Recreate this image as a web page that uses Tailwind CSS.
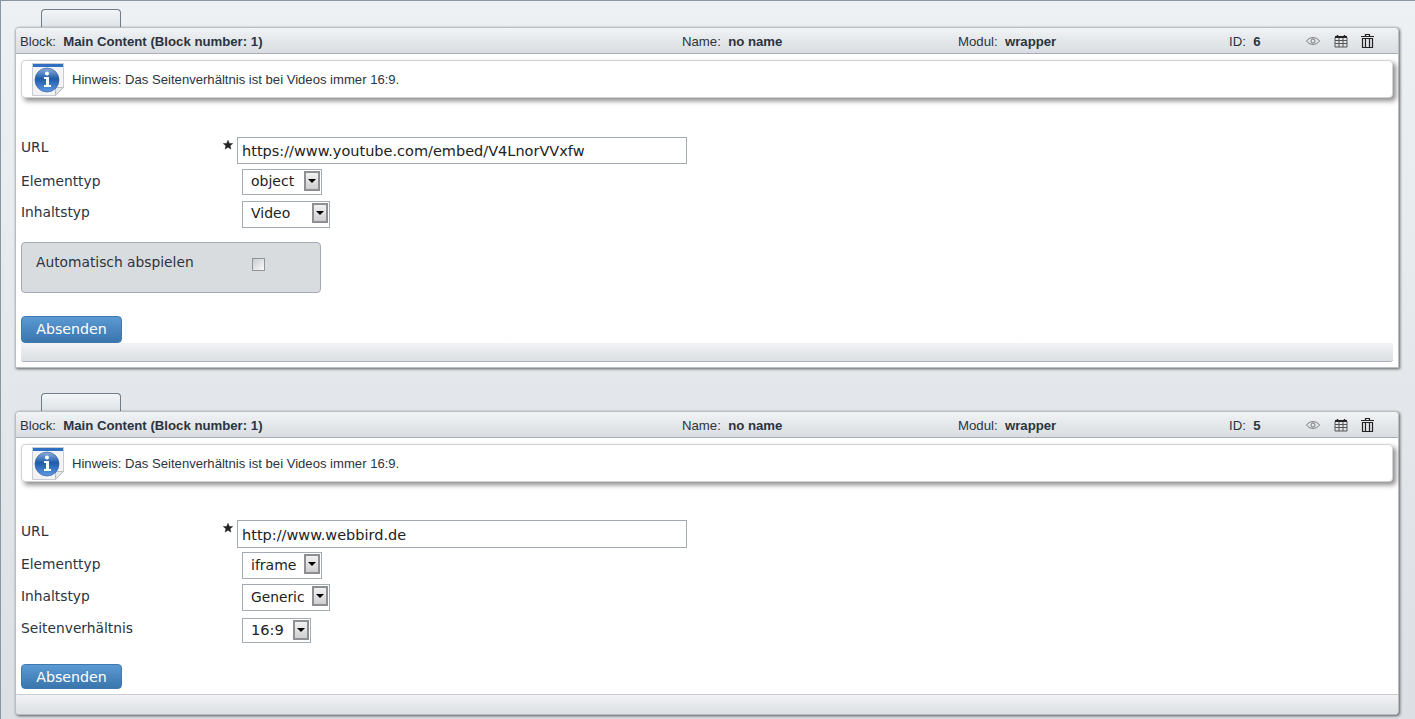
<!DOCTYPE html>
<html lang="de">
<head>
<meta charset="UTF-8">
<title>Blocks</title>
<script src="https://cdn.jsdelivr.net/npm/@tailwindcss/browser@4"></script>
</head>
<body class="h-[719px] overflow-hidden bg-gradient-to-b from-[#eef1f4] to-[#dcdfe3] border-t border-l border-[#8a96a3] font-['Liberation_Sans',sans-serif] text-[#2b3440]">

<div class="pl-[14px] pr-[16px] pt-[8px]">

  <!-- block 6 -->
  <section>
    <div class="ml-[26px] w-[80px] h-[18px] rounded-t-[4px] border border-b-0 border-[#6f7d8a] bg-gradient-to-b from-[#f3f5f7] to-[#dfe3e7]"></div>
    <div class="h-[341px] bg-white rounded-t-[4px] border border-[#b9bec4] shadow-[1px_1px_3px_rgba(0,0,0,0.6)] flex flex-col">
      <div class="h-[26px] shrink-0 pl-[4px] pt-[2px] grid grid-cols-[662px_276px_271px_1fr] items-center text-[13.2px] border-b border-[#a9afb6] bg-gradient-to-b from-[#f1f3f5] to-[#d9dde1] rounded-t-[4px]">
        <div>Block:&nbsp; <b>Main Content (Block number: 1)</b></div>
        <div>Name:&nbsp; <b>no name</b></div>
        <div>Modul:&nbsp; <b>wrapper</b></div>
        <div class="flex items-center">
          <span class="w-[77px]">ID:&nbsp; <b>6</b></span>
          <span class="flex items-center gap-[14px]">
            <svg width="14" height="10" viewBox="0 0 14 10" fill="none" stroke="#777"><path d="M.5 5c3-4.500 10-4.500 13 0-3 4.500-10 4.500-13 0z"/><circle cx="7" cy="5" r="2"/></svg>
            <svg width="14" height="14" viewBox="0 0 14 14" fill="none" stroke="#555"><path d="M1 3.500h12v9.500H1zM1 6.500h12M1 9.500h12M5 3.500v9.500M9 3.500v9.500"/><path d="M3.500 1v2.500M10.500 1v2.500" stroke="#222" stroke-width="1.500"/><path d="M1 3h12" stroke="#222" stroke-width="2"/></svg>
            <svg class="-ml-[1px]" width="13" height="14" viewBox="0 0 13 14" fill="none" stroke="#222"><path d="M0 2.500h13M4.500 2.500V.5h4v2" stroke-width="1.200"/><path d="M1.500 4.500h10V13.500h-10zM4.500 4.500v9M8.500 4.500v9" stroke-width="1.200"/></svg>
          </span>
        </div>
      </div>

      <div class="mx-[5px] mt-[6px] h-[38px] shrink-0 flex items-center gap-[8px] pl-[10px] bg-white rounded-[4px] border border-[#cfd2d6] shadow-[3px_3px_5px_rgba(0,0,0,0.45)] text-[13.1px]">
        <svg width="32" height="33" viewBox="0 0 32 33"><defs><linearGradient id="orb" x1="0" y1="0" x2="0" y2="1"><stop offset="0" stop-color="#8fb0e0"/><stop offset="0.450" stop-color="#1f5aa8"/><stop offset="1" stop-color="#5f9ae6"/></linearGradient></defs><path d="M.5.5h31v24l-8 8H.5z" fill="#f2f3f5" stroke="#c9ccd0"/><path d="M1 1h30v3H1z" fill="#2f6fc4"/><path d="M23.500 32.500v-8h8z" fill="#e4e6e9" stroke="#b9bcc0"/><circle cx="15" cy="17" r="12" fill="url(#orb)" stroke="#2a5596" stroke-width=".6"/><circle cx="15" cy="10.500" r="2" fill="#fff"/><path d="M12 14h5v8h2v2h-7v-2h2v-6h-2z" fill="#fff"/></svg>
        <span class="pt-[1px]">Hinweis: Das Seitenverhältnis ist bei Videos immer 16:9.</span>
      </div>

      <form class="font-['DejaVu_Sans',sans-serif] text-[13.8px] pl-[5px] pt-[39px]">
        <div class="flex h-[27px]">
          <label class="w-[203px]">URL</label>
          <svg class="w-[10px] h-[10px] mt-[3px] -ml-[1px] mr-[4px]" viewBox="0 0 10 10" fill="#222" stroke="#222" stroke-width=".5" stroke-linejoin="round"><path d="M5 .3l1.300 3.100 3.400.2-2.600 2.200.8 3.300L5 7.300 2.100 9.100l.8-3.300L.3 3.600l3.400-.2z"/></svg>
          <input class="w-[450px] h-[27px] px-[4px] border border-[#a5abb2] text-[14.5px] text-[#222] outline-none" value="https://www.youtube.com/embed/V4LnorVVxfw">
        </div>
        <div class="flex mt-[5px] h-[26px]">
          <label class="w-[221px] pt-[2px]">Elementtyp</label>
          <div class="w-[80px] h-[26px] border border-[#a5abb2] flex justify-between pl-[8px] pr-[1px] pt-[1px] text-[14px] text-[#222]"><span>object</span><span class="w-[16px] h-[20px] border-2 border-[#8d8f92] bg-gradient-to-b from-[#f2f2f2] to-[#cfcfcf] flex items-center justify-center"><span class="border-x-[4px] border-t-[4px] border-x-transparent border-t-black"></span></span></div>
        </div>
        <div class="flex mt-[6px] h-[27px]">
          <label class="w-[221px] pt-[1px]">Inhaltstyp</label>
          <div class="w-[88px] h-[27px] border border-[#a5abb2] flex justify-between pl-[8px] pr-[1px] pt-[1px] text-[14px] text-[#222]"><span>Video</span><span class="w-[16px] h-[20px] border-2 border-[#8d8f92] bg-gradient-to-b from-[#f2f2f2] to-[#cfcfcf] flex items-center justify-center"><span class="border-x-[4px] border-t-[4px] border-x-transparent border-t-black"></span></span></div>
        </div>
        <div class="mt-[14px] w-[300px] h-[51px] flex pl-[14px] pt-[9px] bg-[#d9dcdf] border border-[#a5abb2] rounded-[4px]">
          <label class="w-[216px]">Automatisch abspielen</label>
          <span class="mt-[6px] w-[13px] h-[13px] border border-[#8f9499] bg-gradient-to-br from-[#c8cbd0] to-[#fbfbfb]"></span>
        </div>
        <button type="button" class="mt-[23px] block w-[101px] h-[27px] text-[14.2px] text-white rounded-[4px] border border-[#3f79b0] bg-gradient-to-b from-[#5b9ad3] to-[#3a75ad]">Absenden</button>
      </form>

      <div class="mx-[5px] h-[19px] shrink-0 rounded-b-[3px] border-b border-[#aab0b7] bg-gradient-to-b from-[#f1f3f5] to-[#dcdfe3]"></div>
    </div>
  </section>

  <!-- block 5 -->
  <section class="mt-[25px]">
    <div class="ml-[26px] w-[80px] h-[18px] rounded-t-[4px] border border-b-0 border-[#6f7d8a] bg-gradient-to-b from-[#f3f5f7] to-[#dfe3e7]"></div>
    <div class="h-[304px] bg-white rounded-[4px] border border-[#b9bec4] shadow-[1px_1px_3px_rgba(0,0,0,0.6)] flex flex-col">
      <div class="h-[26px] shrink-0 pl-[4px] pt-[2px] grid grid-cols-[662px_276px_271px_1fr] items-center text-[13.2px] border-b border-[#a9afb6] bg-gradient-to-b from-[#f1f3f5] to-[#d9dde1] rounded-t-[4px]">
        <div>Block:&nbsp; <b>Main Content (Block number: 1)</b></div>
        <div>Name:&nbsp; <b>no name</b></div>
        <div>Modul:&nbsp; <b>wrapper</b></div>
        <div class="flex items-center">
          <span class="w-[77px]">ID:&nbsp; <b>5</b></span>
          <span class="flex items-center gap-[14px]">
            <svg width="14" height="10" viewBox="0 0 14 10" fill="none" stroke="#777"><path d="M.5 5c3-4.500 10-4.500 13 0-3 4.500-10 4.500-13 0z"/><circle cx="7" cy="5" r="2"/></svg>
            <svg width="14" height="14" viewBox="0 0 14 14" fill="none" stroke="#555"><path d="M1 3.500h12v9.500H1zM1 6.500h12M1 9.500h12M5 3.500v9.500M9 3.500v9.500"/><path d="M3.500 1v2.500M10.500 1v2.500" stroke="#222" stroke-width="1.500"/><path d="M1 3h12" stroke="#222" stroke-width="2"/></svg>
            <svg class="-ml-[1px]" width="13" height="14" viewBox="0 0 13 14" fill="none" stroke="#222"><path d="M0 2.500h13M4.500 2.500V.5h4v2" stroke-width="1.200"/><path d="M1.500 4.500h10V13.500h-10zM4.500 4.500v9M8.500 4.500v9" stroke-width="1.200"/></svg>
          </span>
        </div>
      </div>

      <div class="mx-[5px] mt-[6px] h-[38px] shrink-0 flex items-center gap-[8px] pl-[10px] bg-white rounded-[4px] border border-[#cfd2d6] shadow-[3px_3px_5px_rgba(0,0,0,0.45)] text-[13.1px]">
        <svg width="32" height="33" viewBox="0 0 32 33"><path d="M.5.5h31v24l-8 8H.5z" fill="#f2f3f5" stroke="#c9ccd0"/><path d="M1 1h30v3H1z" fill="#2f6fc4"/><path d="M23.500 32.500v-8h8z" fill="#e4e6e9" stroke="#b9bcc0"/><circle cx="15" cy="17" r="12" fill="url(#orb)" stroke="#2a5596" stroke-width=".6"/><circle cx="15" cy="10.500" r="2" fill="#fff"/><path d="M12 14h5v8h2v2h-7v-2h2v-6h-2z" fill="#fff"/></svg>
        <span class="pt-[1px]">Hinweis: Das Seitenverhältnis ist bei Videos immer 16:9.</span>
      </div>

      <form class="font-['DejaVu_Sans',sans-serif] text-[13.8px] pl-[5px] pt-[38px]">
        <div class="flex h-[28px]">
          <label class="w-[203px] pt-[1px]">URL</label>
          <svg class="w-[10px] h-[10px] mt-[3px] -ml-[1px] mr-[4px]" viewBox="0 0 10 10" fill="#222" stroke="#222" stroke-width=".5" stroke-linejoin="round"><path d="M5 .3l1.300 3.100 3.400.2-2.600 2.200.8 3.300L5 7.300 2.100 9.100l.8-3.300L.3 3.600l3.400-.2z"/></svg>
          <input class="w-[450px] h-[28px] px-[4px] pt-[2px] border border-[#a5abb2] text-[14.5px] text-[#222] outline-none" value="http://www.webbird.de">
        </div>
        <div class="flex mt-[4px] h-[27px]">
          <label class="w-[221px] pt-[2px]">Elementtyp</label>
          <div class="w-[80px] h-[27px] border border-[#a5abb2] flex justify-between pl-[8px] pr-[1px] pt-[1px] text-[14px] text-[#222]"><span class="pt-[1px]">iframe</span><span class="w-[16px] h-[20px] border-2 border-[#8d8f92] bg-gradient-to-b from-[#f2f2f2] to-[#cfcfcf] flex items-center justify-center"><span class="border-x-[4px] border-t-[4px] border-x-transparent border-t-black"></span></span></div>
        </div>
        <div class="flex mt-[5px] h-[27px]">
          <label class="w-[221px] pt-[2px]">Inhaltstyp</label>
          <div class="w-[88px] h-[27px] border border-[#a5abb2] flex justify-between pl-[8px] pr-[1px] pt-[1px] text-[13.8px] text-[#222]"><span class="pt-[1px]">Generic</span><span class="w-[16px] h-[20px] border-2 border-[#8d8f92] bg-gradient-to-b from-[#f2f2f2] to-[#cfcfcf] flex items-center justify-center"><span class="border-x-[4px] border-t-[4px] border-x-transparent border-t-black"></span></span></div>
        </div>
        <div class="flex mt-[7px] h-[25px]">
          <label class="w-[221px]">Seitenverhältnis</label>
          <div class="w-[69px] h-[25px] border border-[#a5abb2] flex justify-between pl-[8px] pr-[1px] text-[14.6px] text-[#222]"><span>16:9</span><span class="mt-[1px] w-[16px] h-[20px] border-2 border-[#8d8f92] bg-gradient-to-b from-[#f2f2f2] to-[#cfcfcf] flex items-center justify-center"><span class="border-x-[4px] border-t-[4px] border-x-transparent border-t-black"></span></span></div>
        </div>
        <button type="button" class="mt-[21px] block w-[101px] h-[25px] pt-[2px] text-[14.2px] text-white rounded-[4px] border border-[#3f79b0] bg-gradient-to-b from-[#5b9ad3] to-[#3a75ad]">Absenden</button>
      </form>

      <div class="mt-auto h-[20px] shrink-0 rounded-b-[4px] border-t border-[#c9ccd0] bg-gradient-to-b from-[#f1f3f5] to-[#dcdfe3]"></div>
    </div>
  </section>
</div>

</body>
</html>
